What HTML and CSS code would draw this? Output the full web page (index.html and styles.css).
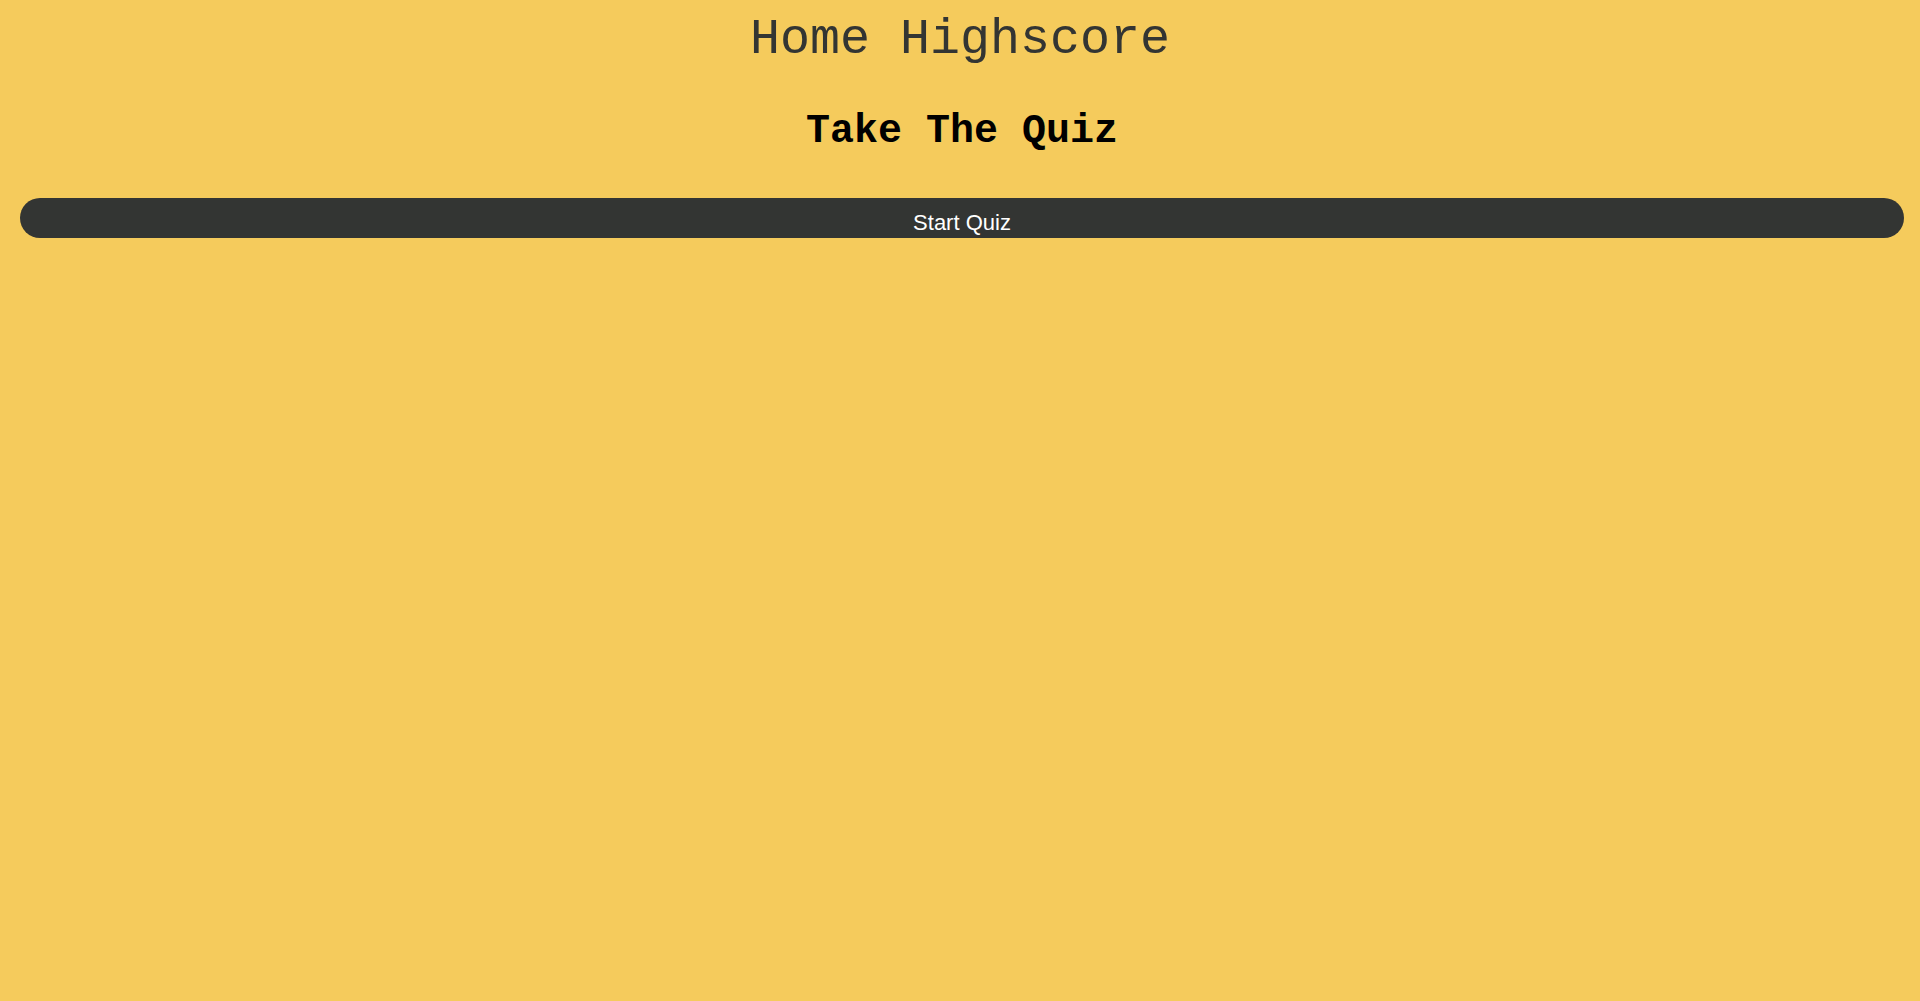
FILE: index.html
```html
<!DOCTYPE html>
<html lang="en">
<head>
<meta charset="utf-8">
<title>Quiz</title>
<link rel="stylesheet" href="styles.css">
</head>
<body>
<header class="site-header">
  <nav class="nav">
    <a class="nav-link" href="#">Home</a>
    <a class="nav-link" href="#">Highscore</a>
  </nav>
</header>
<main class="main">
  <h2 class="title">Take The Quiz</h2>
  <button class="start-btn" type="button">Start Quiz</button>
</main>
</body>
</html>
```
FILE: styles.css
```css
html, body {
  margin: 0;
  padding: 0;
}
body {
  background: #F5CB5C;
  min-height: 100vh;
  font-family: "Liberation Sans", Arial, sans-serif;
}
.site-header {
  padding-top: 11px;
  text-align: center;
}
.nav {
  font-family: "Liberation Mono", "Courier New", monospace;
  font-size: 50px;
  line-height: normal;
}
.nav-link {
  color: #333533;
  text-decoration: none;
}
.main {
  padding: 0 16px 0 20px;
  display: flex;
  flex-direction: column;
  align-items: stretch;
}
.title {
  margin: 41px 0 0;
  text-align: center;
  font-family: "Liberation Mono", "Courier New", monospace;
  font-weight: bold;
  font-size: 40px;
  line-height: normal;
  color: #000;
}
.start-btn {
  margin-top: 44px;
  box-sizing: border-box;
  height: 40px;
  padding: 12px 0 3px;
  border: none;
  border-radius: 20px;
  background: #333533;
  color: #ffffff;
  font-family: "Liberation Sans", Arial, sans-serif;
  font-size: 22px;
  line-height: normal;
  text-align: center;
  cursor: pointer;
}
```
